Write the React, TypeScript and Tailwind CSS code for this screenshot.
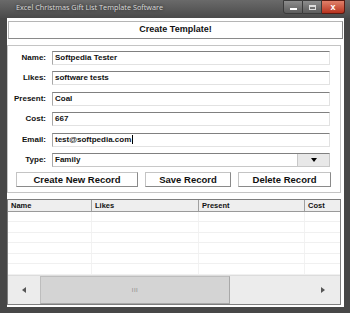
import React from "react";

const font = { fontFamily: '"Liberation Sans", Arial, sans-serif' };

function Field({ label, value, caret }: { label: string; value: string; caret?: boolean }) {
  return (
    <div className="flex items-center h-[14px]">
      <div className="w-[38px] text-right font-bold text-[8px] leading-none text-[#111]">{label}</div>
      <div className="ml-[6px] w-[278px] h-[14px] bg-white border border-[#e2e2e2] border-t-[#808080] border-l-[#a8a8a8] flex items-center pl-[2px] text-[8px] font-bold leading-none text-[#111]">
        <span>{value}</span>
        {caret && <span className="inline-block w-px h-[9px] bg-black ml-px" />}
      </div>
    </div>
  );
}

export default function App() {
  const rows = [0, 1, 2, 3, 4, 5];
  return (
    <div className="w-[350px] h-[313px] bg-[#474747] flex flex-col overflow-hidden" style={font}>
      {/* Title bar */}
      <div className="h-[18px] flex items-start bg-gradient-to-b from-[#6a6a6a] to-[#4a4a4a]">
        <div className="pl-[16px] pt-[4px] text-[7.3px] leading-none text-[#dcdcdc] whitespace-nowrap" style={{ fontFamily: '"Open Sans", "Noto Sans", sans-serif', textShadow: "0 0 3px #222" }}>
          Excel Christmas Gift List Template Software
        </div>
        <div className="ml-auto mr-[5px] flex h-[14px]">
          <div className="w-[20px] h-[14px] rounded-bl-[3px] border border-[#3a3a3a] bg-gradient-to-b from-[#8d8d8d] to-[#5c5c5c] flex items-center justify-center">
            <div className="w-[7px] h-[2px] bg-white mt-[4px]" />
          </div>
          <div className="w-[19px] h-[14px] border border-l-0 border-[#3a3a3a] bg-gradient-to-b from-[#8d8d8d] to-[#5c5c5c] flex items-center justify-center">
            <div className="w-[7px] h-[5px] border border-[#ddd] border-t-2" />
          </div>
          <div className="w-[23px] h-[14px] rounded-br-[3px] border border-l-0 border-[#5a1a12] bg-gradient-to-b from-[#e0806a] to-[#b8301c] flex items-center justify-center">
            <span className="text-white text-[9px] font-bold leading-none">x</span>
          </div>
        </div>
      </div>

      {/* Content */}
      <div className="ml-[7px] w-[337px] h-[289px] bg-white flex flex-col">
        {/* Header */}
        <div className="mt-[3px] ml-px w-[335px] h-[18px] border border-[#b5b5b5] border-b-[#8a8a8a] border-r-[#8a8a8a] flex items-center justify-center font-bold text-[9px] text-[#111]">
          Create Template!
        </div>

        {/* Form group */}
        <div className="mt-[6px] w-[334px] h-[148px] border border-[#c4c4c4] flex flex-col">
          <div className="pt-[5px] flex flex-col gap-[6.4px]">
            <Field label="Name:" value="Softpedia Tester" />
            <Field label="Likes:" value="software tests" />
            <Field label="Present:" value="Coal" />
            <Field label="Cost:" value="667" />
            <Field label="Email:" value="test@softpedia.com" caret />
            <div className="flex items-center h-[14px]">
              <div className="w-[38px] text-right font-bold text-[8px] leading-none text-[#111]">Type:</div>
              <div className="ml-[6px] w-[278px] h-[14px] bg-white border border-[#c8c8c8] border-t-[#808080] border-l-[#a8a8a8] flex items-center text-[8px] font-bold leading-none text-[#111]">
                <span className="pl-[2px] flex-1">Family</span>
                <div className="w-[32px] h-[12px] bg-[#e8e8e8] border-l border-[#c8c8c8] flex items-center justify-center">
                  <div className="w-0 h-0 border-l-[3.5px] border-r-[3.5px] border-t-[4px] border-l-transparent border-r-transparent border-t-black" />
                </div>
              </div>
            </div>
          </div>
          <div className="mt-[5px] pl-[8px] flex gap-[7px]">
            {[
              ["Create New Record", "w-[122px]"],
              ["Save Record", "w-[86px]"],
              ["Delete Record", "w-[93px]"],
            ].map(([t, w]) => (
              <div key={t} className={`${w} h-[15px] bg-white border border-[#c4c4c4] border-b-[#8a8a8a] border-r-[#8a8a8a] flex items-center justify-center font-bold text-[9.5px] leading-none text-[#111]`}>
                {t}
              </div>
            ))}
          </div>
        </div>

        {/* Table */}
        <div className="mt-[6px] w-[334px] h-[106px] border border-[#7e7e7e] flex flex-col">
          <div className="h-[13px] bg-[#eeeeee] border-b border-[#9a9a9a] flex text-[7.5px] font-bold leading-none text-[#111]">
            <div className="w-[84px] border-r border-[#a0a0a0] flex items-center pl-[3px]">Name</div>
            <div className="w-[107px] border-r border-[#a0a0a0] flex items-center pl-[3px]">Likes</div>
            <div className="w-[106px] border-r border-[#a0a0a0] flex items-center pl-[3px]">Present</div>
            <div className="flex-1 flex items-center pl-[3px]">Cost</div>
          </div>
          <div className="flex-1 flex flex-col">
            {rows.map((r) => (
              <div key={r} className="h-[10.5px] border-b border-[#f0f0f0] flex">
                <div className="w-[84px] border-r border-[#f2f2f2]" />
                <div className="w-[107px] border-r border-[#f2f2f2]" />
                <div className="w-[106px] border-r border-[#f2f2f2]" />
                <div className="flex-1" />
              </div>
            ))}
          </div>
          <div className="h-[32px] bg-[#ececec] border-t border-[#dcdcdc] flex items-stretch">
            <div className="w-[32px] flex items-center justify-center">
              <div className="w-0 h-0 border-t-[3px] border-b-[3px] border-r-[4px] border-t-transparent border-b-transparent border-r-[#555]" />
            </div>
            <div className="w-[190px] bg-[#d4d4d4] border border-[#bdbdbd] border-b-[#a8a8a8] border-r-[#a8a8a8] flex items-center justify-center">
              <span className="text-[6px] text-[#888] leading-none tracking-[0.5px]">III</span>
            </div>
            <div className="flex-1 flex items-center justify-end pr-[15px]">
              <div className="w-0 h-0 border-t-[3px] border-b-[3px] border-l-[4px] border-t-transparent border-b-transparent border-l-[#555]" />
            </div>
          </div>
        </div>
      </div>
    </div>
  );
}
